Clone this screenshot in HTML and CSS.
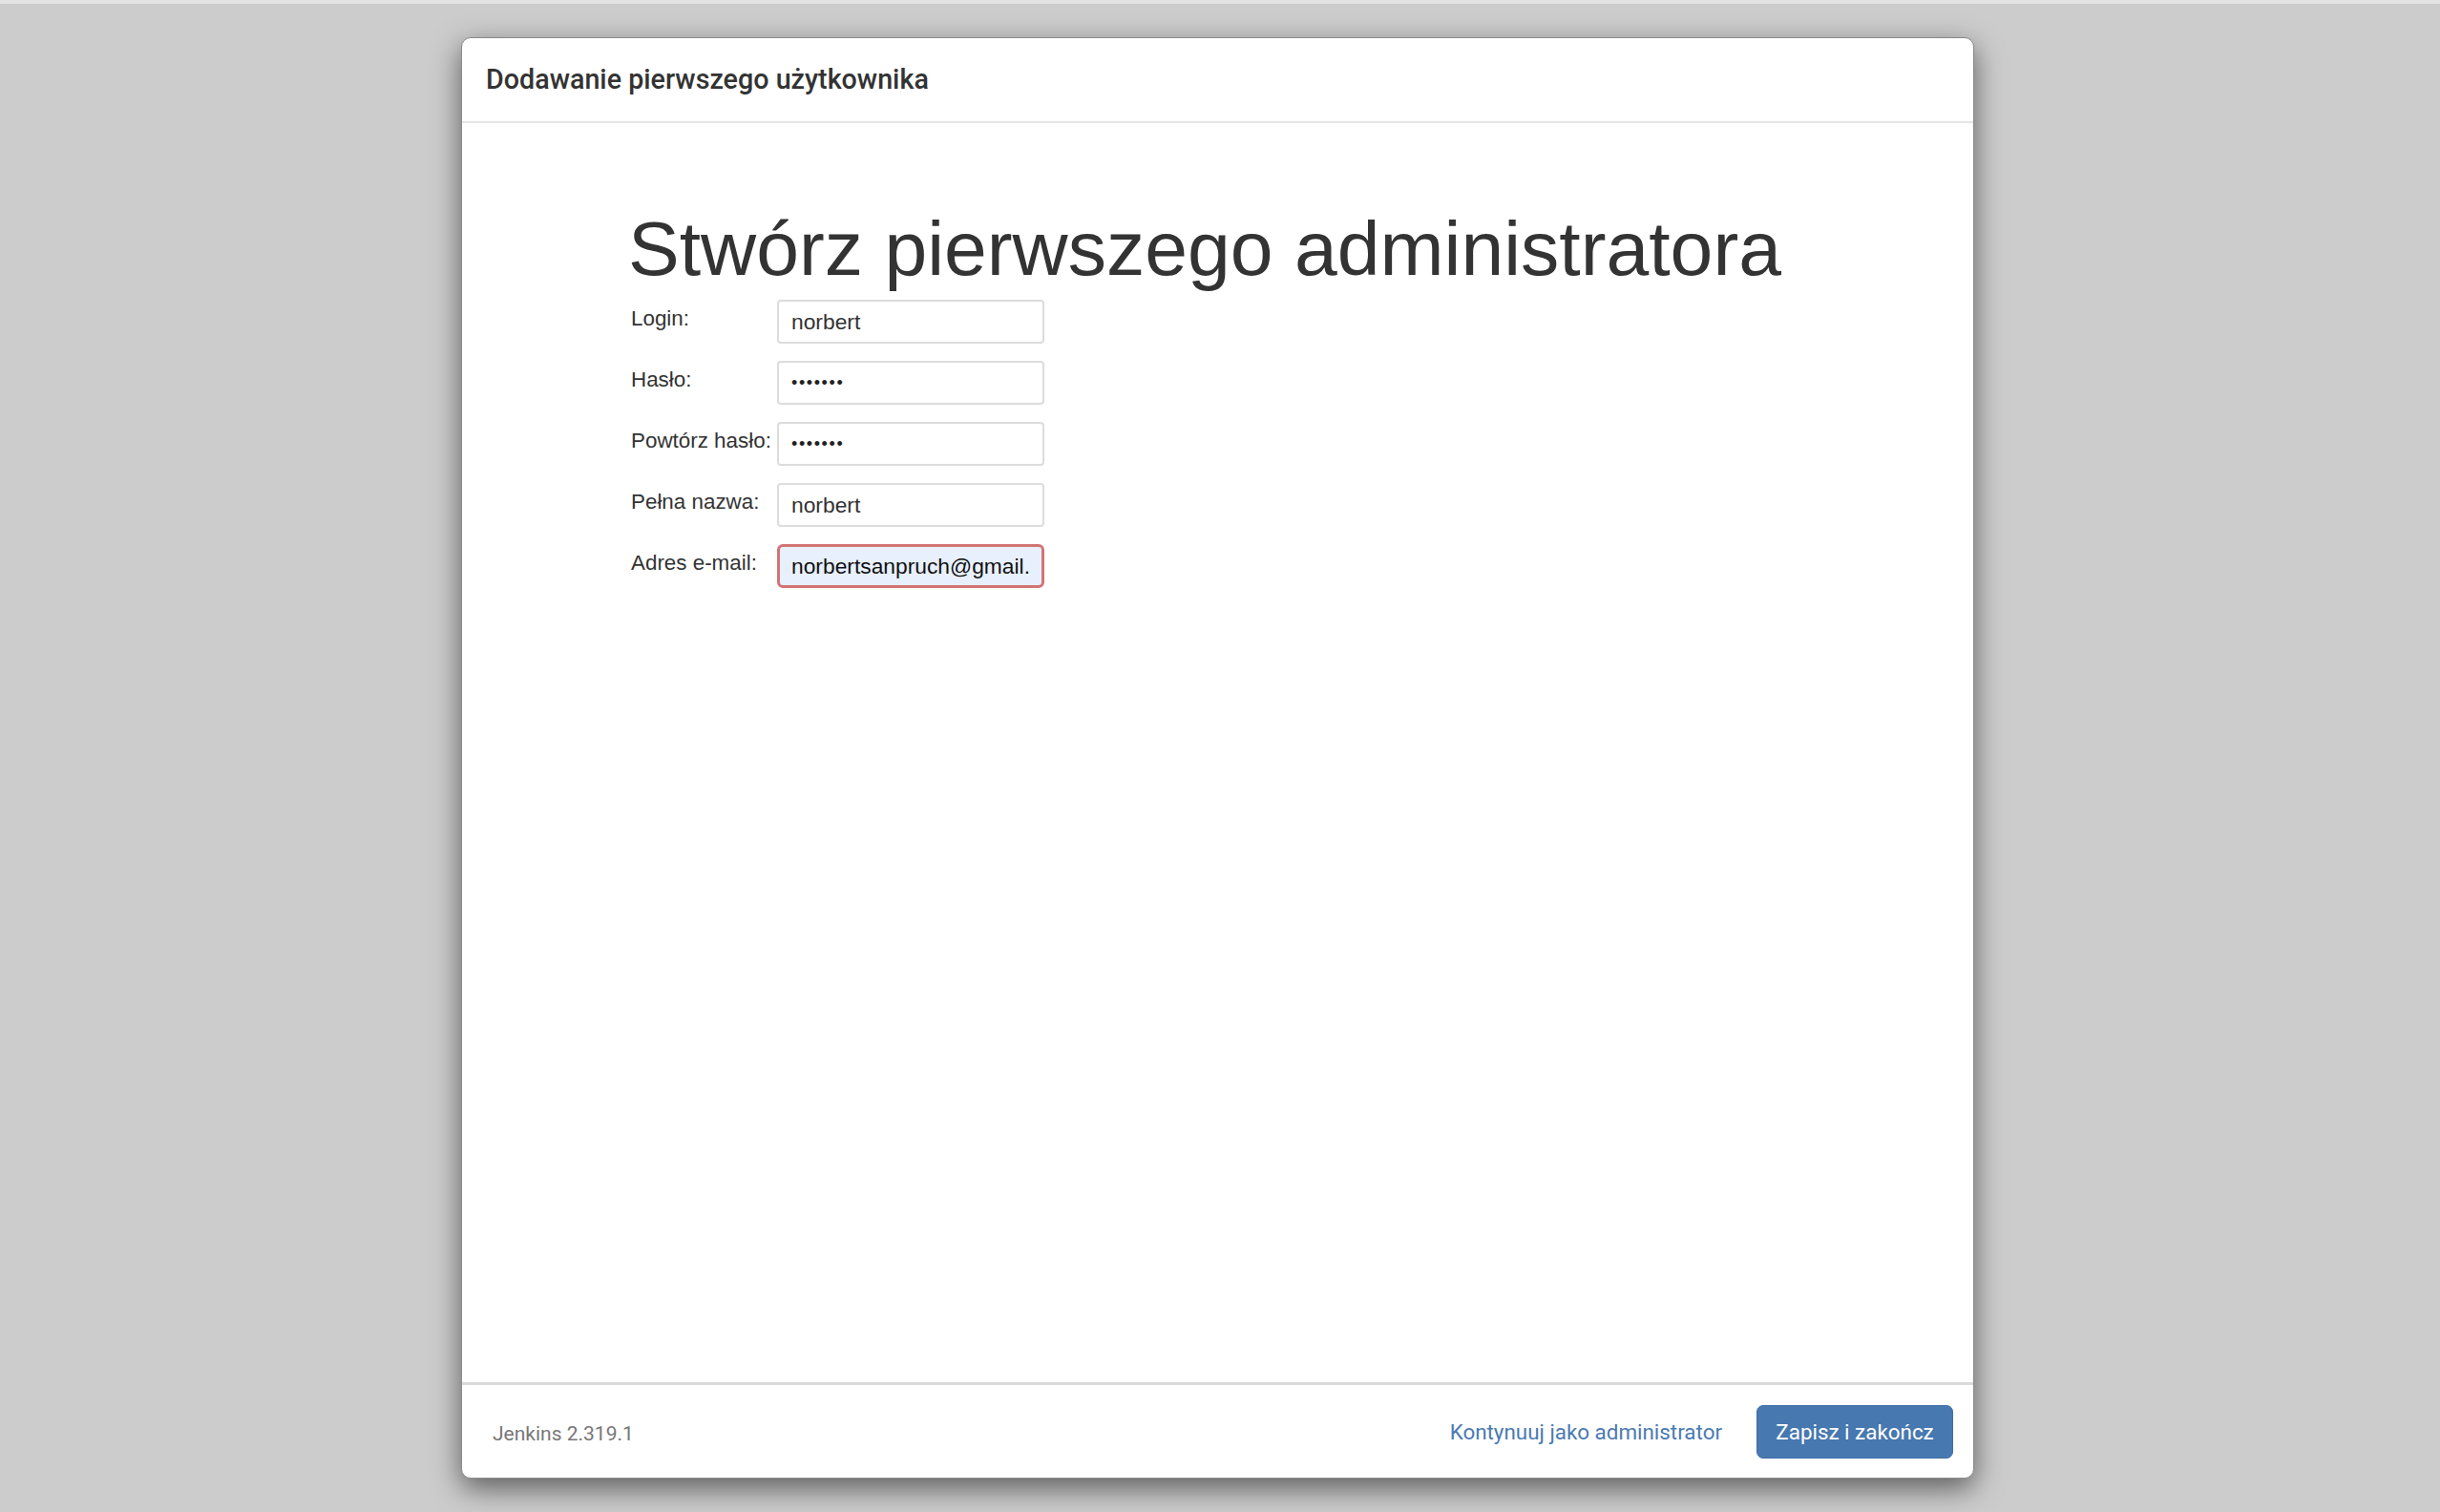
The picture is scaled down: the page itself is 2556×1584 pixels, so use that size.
FILE: index.html
```html
<!DOCTYPE html>
<html lang="pl">
<head>
<meta charset="utf-8">
<title>Jenkins</title>
<link rel="stylesheet" href="styles.css">
</head>
<body>
<div class="topstrip"></div>
<div class="dialog">
  <div class="dialog-header">Dodawanie pierwszego użytkownika</div>
  <div class="dialog-body">
    <h1 class="title">Stwórz pierwszego administratora</h1>
    <div class="form">
      <div class="row">
        <label class="label">Login:</label>
        <div class="field"><span class="value">norbert</span></div>
      </div>
      <div class="row">
        <label class="label">Hasło:</label>
        <div class="field pw"><span class="value">•••••••</span></div>
      </div>
      <div class="row">
        <label class="label">Powtórz hasło:</label>
        <div class="field pw"><span class="value">•••••••</span></div>
      </div>
      <div class="row">
        <label class="label">Pełna nazwa:</label>
        <div class="field"><span class="value">norbert</span></div>
      </div>
      <div class="row">
        <label class="label">Adres e-mail:</label>
        <div class="field email"><span class="value">norbertsanpruch@gmail.com</span></div>
      </div>
    </div>
  </div>
  <div class="dialog-footer">
    <span class="version">Jenkins 2.319.1</span>
    <div class="actions">
      <a class="link">Kontynuuj jako administrator</a>
      <button class="btn">Zapisz i zakończ</button>
    </div>
  </div>
</div>
</body>
</html>
```
FILE: styles.css
```css
html, body {
  margin: 0;
  padding: 0;
}
body {
  background: #cccccc;
  width: 2556px;
  height: 1584px;
  overflow: hidden;
  font-family: "Liberation Sans", Arial, sans-serif;
}
.topstrip {
  height: 4px;
  background: #e3e3e3;
}
.dialog {
  margin: 35px 0 0 483px;
  width: 1585px;
  height: 1510px;
  box-sizing: border-box;
  background: #fff;
  border: 1px solid #8a8a8a;
  border-radius: 10px;
  box-shadow: 0 10px 30px rgba(0,0,0,0.55);
  display: flex;
  flex-direction: column;
  overflow: hidden;
}
.dialog-header {
  height: 87px;
  line-height: 87px;
  padding-left: 25px;
  font-family: Roboto, "Liberation Sans", sans-serif;
  font-weight: 500;
  font-size: 28.7px;
  color: #333;
  border-bottom: 2px solid #e5e5e5;
  flex: none;
}
.dialog-body {
  flex: 1;
  padding: 87px 0 0 174px;
}
.title {
  margin: 0;
  font-family: "Liberation Sans", Arial, sans-serif;
  font-weight: normal;
  font-size: 80.5px;
  line-height: 88px;
  color: #333;
}
.form {
  margin-top: 10px;
  margin-left: 3px;
  display: flex;
  flex-direction: column;
  gap: 18px;
}
.row {
  display: flex;
  align-items: flex-start;
}
.label {
  width: 153px;
  padding-top: 7px;
  font-size: 22.4px;
  line-height: 26px;
  color: #333;
  white-space: nowrap;
}
.field {
  width: 280px;
  height: 46px;
  box-sizing: border-box;
  border: 2px solid #dcdcdc;
  border-radius: 4px;
  padding: 0 13px;
  font-size: 22.8px;
  line-height: 42px;
  color: #333;
  white-space: nowrap;
  display: flex;
}
.value {
  display: block;
  flex: 1;
  min-width: 0;
  overflow: hidden;
}
.field.pw {
  font-size: 18px;
  letter-spacing: 1.6px;
  color: #222;
}
.field.email {
  border: 3px solid #d27474;
  border-radius: 6px;
  background: #e8f0fe;
  padding: 0 12px;
  line-height: 40px;
  color: #111;
}
.dialog-footer {
  flex: none;
  height: 97px;
  border-top: 3px solid #dadada;
  display: flex;
  align-items: center;
  justify-content: space-between;
  padding: 0 21px 0 32px;
  font-family: Roboto, "Liberation Sans", sans-serif;
}
.version {
  font-size: 21px;
  color: #777;
  padding-top: 4px;
}
.actions {
  display: flex;
  align-items: center;
  gap: 36px;
}
.link {
  font-size: 22.4px;
  color: #4a7ab2;
}
.btn {
  font-family: Roboto, "Liberation Sans", sans-serif;
  font-size: 22.4px;
  color: #fff;
  background: #4778b0;
  border: 1px solid #3f6ea6;
  border-radius: 7px;
  height: 56px;
  width: 206px;
  padding: 0;
}
```
